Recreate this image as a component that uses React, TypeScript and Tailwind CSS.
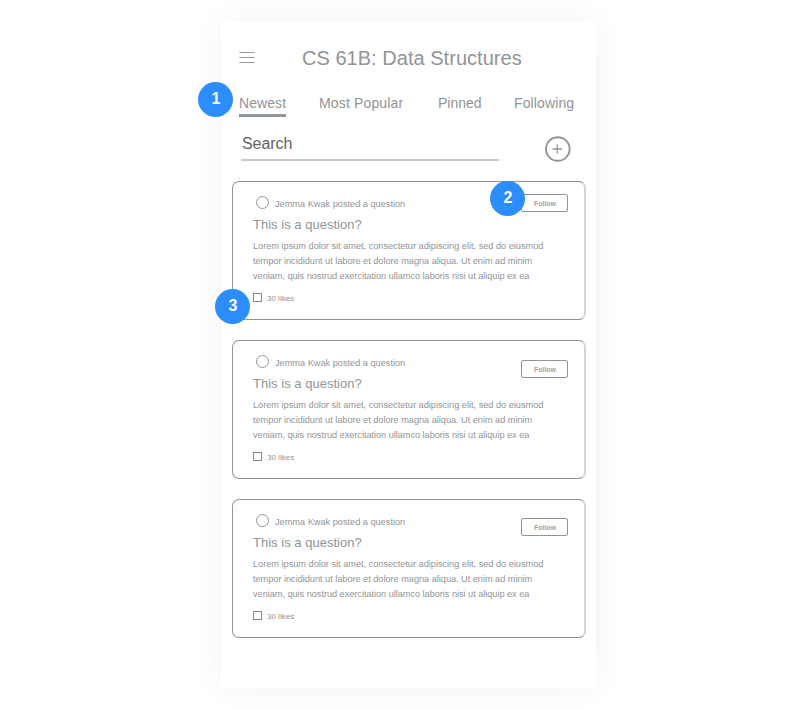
import React from "react";

type Tab = { label: string; box: string; active?: boolean };

const tabs: Tab[] = [
  { label: "Newest", box: "w-[47px] tracking-[0.08px]", active: true },
  { label: "Most Popular", box: "ml-[33px] w-[85px] tracking-[0.15px]" },
  { label: "Pinned", box: "ml-[34px] w-[44px]" },
  { label: "Following", box: "ml-[32px] w-[61px] tracking-[0.12px]" },
];

function Marker({ n, place }: { n: number; place: string }) {
  return (
    <div
      className={`absolute flex h-[35px] w-[35px] justify-center rounded-full bg-[#2c8dfe] pl-px text-base leading-[33px] font-bold text-white ${place}`}
    >
      {n}
    </div>
  );
}

function Card({ followTop, children }: { followTop: string; children?: React.ReactNode }) {
  return (
    <article className="relative flex h-[139px] w-[354px] justify-between rounded-[7px] border border-r-2 border-[#909496] border-r-[#d3d4d4] pr-4 pl-5">
      <div className="whitespace-nowrap">
        <div className="mt-[14px] flex h-[14px] items-center pl-[3px]">
          <svg width="13" height="13" viewBox="0 0 13 13" className="-mt-[1px]">
            <circle cx="6.5" cy="6.5" r="6" fill="none" stroke="#909496" />
          </svg>
          <span className="ml-[6px] pt-[2px] text-[9.2px] leading-[14px]">Jemma Kwak posted a question</span>
        </div>
        <h2 className="mt-[5px] text-[13px] leading-[20px] tracking-[0.02px]">This is a question?</h2>
        <p className="mt-[4px] text-[9.2px] leading-[15px]">
          <span className="tracking-[-0.01px]">
            Lorem ipsum dolor sit amet, consectetur adipiscing elit, sed do eiusmod
          </span>
          <br />
          <span className="tracking-[-0.025px]">
            tempor incididunt ut labore et dolore magna aliqua. Ut enim ad minim
          </span>
          <br />
          <span className="tracking-[-0.035px]">
            veniam, quis nostrud exercitation ullamco laboris nisi ut aliquip ex ea
          </span>
        </p>
        <div className="mt-[9px] flex h-[9px] items-center">
          <span className="h-[9px] w-[9px] border border-[#848889]" />
          <span className="ml-[5px] pt-[2px] text-[8px] leading-[9px]">30 likes</span>
        </div>
      </div>
      <button
        className={`-ml-10 h-[18px] w-[47px] shrink-0 rounded-[2px] border border-[#909496] pt-px pl-px text-[7px] leading-[15px] font-bold text-[#a0a3a4] ${followTop}`}
      >
        Follow
      </button>
      {children}
    </article>
  );
}

export default function App() {
  return (
    <div className="flex h-[709px] w-[793px] overflow-hidden bg-white pt-[21px] pl-[221px] font-['Liberation_Sans',Arial,sans-serif] text-[#909496]">
      <main className="relative h-[667px] w-[375px] bg-white shadow-[0_0_30px_rgba(0,0,0,0.05)]">
        <header className="flex h-[74px] items-center pl-[18px]">
          <svg width="16" height="12" viewBox="0 0 16 12" stroke="#989c9e">
            <path d="M.4 .5h15.2M.4 5.5h15.2M.4 10.5h15.2" />
          </svg>
          <h1 className="ml-[47px] text-[20px] leading-6 tracking-[0.03px] whitespace-nowrap">
            CS 61B: Data Structures
          </h1>
        </header>
        <nav className="flex h-[22px] pl-[18px] text-[14px] leading-4 whitespace-nowrap">
          {tabs.map((t) => (
            <div key={t.label} className={`${t.box} ${t.active ? "border-b-[3px] border-[#909699]" : ""}`}>
              {t.label}
            </div>
          ))}
        </nav>
        <div className="flex h-[64px] justify-between pr-[25px] pl-5">
          <div className="h-[44px] w-[258px] border-b-2 border-[#cacaca] pt-[18px] pl-px text-[16px] leading-[18px] tracking-[-0.05px] text-[#666364]">
            Search
          </div>
          <svg width="26" height="26" viewBox="0 0 26 26" fill="none" stroke="#909699" className="mt-[19px]">
            <circle cx="12.8" cy="13" r="11.8" strokeWidth="1.9" />
            <path d="M7.5 13h9.5M12.3 8.2v9.6" strokeWidth="1.3" />
          </svg>
        </div>
        <section className="flex flex-col gap-5 pl-[11px]">
          <Card followTop="mt-[12px]">
            <Marker n={2} place="-top-px left-[257px]" />
            <Marker n={3} place="top-[107px] -left-[18px]" />
          </Card>
          <Card followTop="mt-[19px]" />
          <Card followTop="mt-[18px]" />
        </section>
        <Marker n={1} place="top-[61px] -left-[23px]" />
      </main>
    </div>
  );
}
